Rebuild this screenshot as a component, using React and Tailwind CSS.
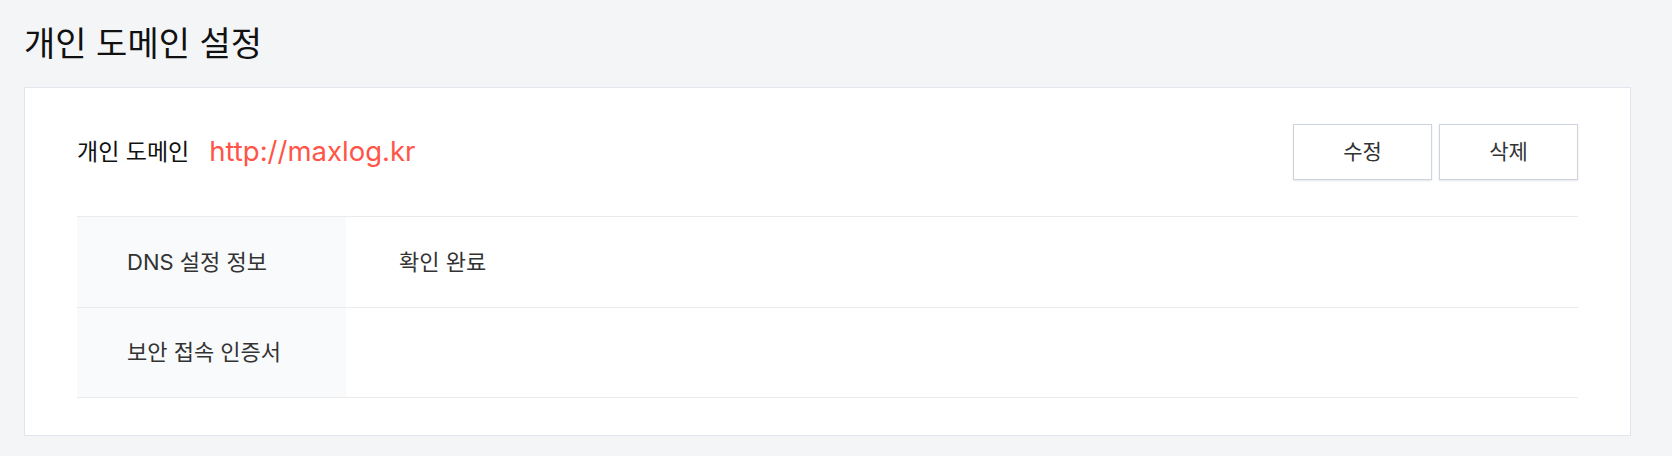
import React from 'react';

const font = { fontFamily: "Inter, 'Noto Sans CJK KR', sans-serif" };

function InfoRow({ label, value, last }) {
  return (
    <div className={`flex h-[91px] border-t border-[#ebebeb] ${last ? 'border-b' : ''}`}>
      <div className="w-[269px] shrink-0 bg-[#f9fafb] flex items-center pl-[50px] text-[22px] text-[#333]">
        {label}
      </div>
      <div className="flex-1 flex items-center pl-[53px] text-[22px] text-[#333]">{value}</div>
    </div>
  );
}

export default function App() {
  return (
    <div className="min-h-[456px] bg-[#f4f5f7] pl-6 pr-[41px] pt-[22px] pb-[21px]" style={font}>
      <h1 className="text-[34px] leading-[44px] text-[#111] mb-[21px]">개인 도메인 설정</h1>

      {/* Card */}
      <div className="bg-white border border-[#e1e5ec] px-[52px] pt-[36px] pb-[37px]">
        <div className="flex items-center justify-between h-[56px] mb-[36px]">
          <div className="flex items-center gap-[20px]">
            <span className="text-[23px] text-[#111]">개인 도메인</span>
            <span className="text-[27.5px] text-[#ff5447]">http://maxlog.kr</span>
          </div>
          <div className="flex gap-[7px]">
            <button className="w-[139px] h-[56px] border border-[#cdd3df] bg-white text-[21px] text-[#333] shadow-[0_1px_2px_rgba(0,0,0,0.1)]">
              수정
            </button>
            <button className="w-[139px] h-[56px] border border-[#cdd3df] bg-white text-[21px] text-[#333] shadow-[0_1px_2px_rgba(0,0,0,0.1)]">
              삭제
            </button>
          </div>
        </div>

        <InfoRow label="DNS 설정 정보" value="확인 완료" />
        <InfoRow label="보안 접속 인증서" value="" last />
      </div>
    </div>
  );
}
